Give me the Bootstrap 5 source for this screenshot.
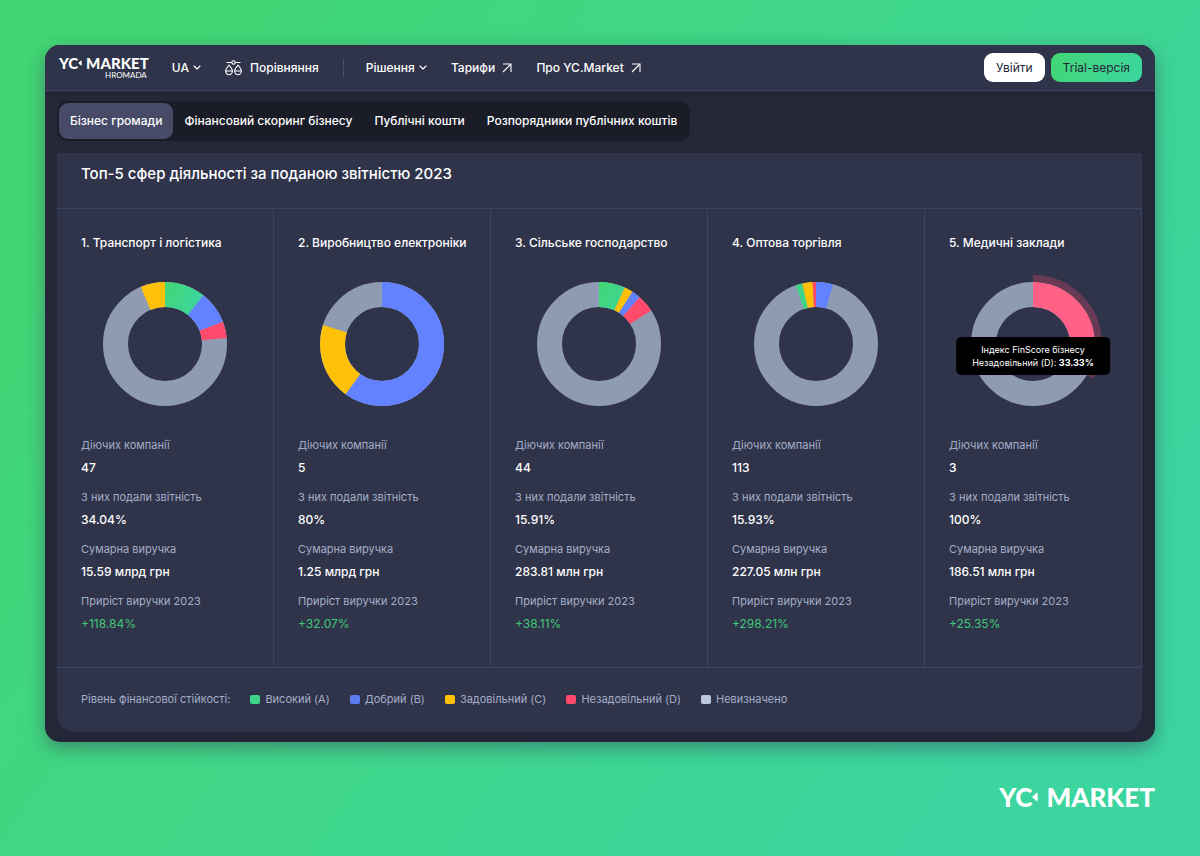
<!DOCTYPE html>
<html lang="uk">
<head>
<meta charset="utf-8">
<meta name="viewport" content="width=device-width, initial-scale=1">
<title>YC Market Hromada</title>
<link href="https://cdn.jsdelivr.net/npm/bootstrap@5.3.0/dist/css/bootstrap.min.css" rel="stylesheet">
<style>
:root{--panel:#30344a;--line:#3d4260;--muted:#a3aec8;--brand:linear-gradient(120deg,#42d674,#3cd5a0)}
body{font-family:Inter,"Liberation Sans",sans-serif;font-size:12px;line-height:20px;color:#fff;background:linear-gradient(125deg,#42d674 10%,#3ed68e 55%,#3cd5a0 85%);min-height:100vh;padding:45px}
.app-frame{background:#242737;border-radius:15px;box-shadow:0 6px 18px rgba(60,64,90,.5);overflow:hidden}
.topbar{background:var(--panel);border-bottom:1px solid var(--line);padding:8px 13px 8px 14px;font-weight:500}
.topbar a,.logo{color:#fff;text-decoration:none}
.menu-btn{background:none;border:0;color:#fff;padding:0;font-weight:500}
.menu-btn svg{margin-left:1px}
.main-nav{margin-left:23px}
.logo{font-family:Lato,"Liberation Sans",sans-serif;font-weight:900;white-space:nowrap;display:flex;align-items:center}
.logo-sm{font-size:15px;line-height:15px}
.logo-lg{font-size:26px;line-height:26px}
.logo-sub{font:400 8px/9px Lato,"Liberation Sans",sans-serif;padding-right:2px}
.vline{width:1px;height:18px;background:#474c68;margin:0 22px 0 24px}
.btn-top{height:29px;padding:0 12px;border:0;border-radius:9px;font-size:12px;font-weight:400;line-height:20px;color:#242737;background:#fff}
.btn-trial,.btn-trial:hover{background:var(--brand);color:#242737}
.top-actions{gap:6px}
.workspace{padding:10px 13px 10px 12px}
.tab-strip{background:#1a1c27;border-radius:11px;padding:2px;width:fit-content}
.tab-strip .nav-link{height:36px;padding:0 11px;border-radius:9px;color:#fff;font-weight:500;line-height:36px}
.tab-strip .nav-link.active{background:#474b68}
.report{background:var(--panel);border-radius:2px 2px 18px 18px;margin-top:12px}
.report h1{font-size:15px;line-height:20px;font-weight:500;margin:0;padding:11px 24px 24px;border-bottom:1px solid var(--line)}
.sector{border-right:1px solid var(--line);padding:24px 0 33px 24px}
.sector h2{font-size:12px;line-height:20px;font-weight:500;margin:0;white-space:nowrap}
.ring-box{position:relative;text-align:center;margin:21px 24px 22px 0}
.ring-box svg{display:block;margin:auto}
.ring-box circle{fill:none;stroke-width:25}
.ring-box .ring-halo{stroke-width:7}
.stats{margin:0}
.stats dt{font-size:11px;line-height:18px;font-weight:400;color:var(--muted)}
.stats dd{font-size:12px;line-height:20px;font-weight:500;margin:4px 0 10px}
.stats dd:last-child{color:#3fc878;margin-bottom:0;font-weight:400}
.ring-tip{position:absolute;top:63px;left:50%;transform:translateX(-50%);background:#000;border-radius:5px;padding:6px 16px;font-size:9px;line-height:13px;white-space:nowrap}
.legend-row{border-top:1px solid var(--line);padding:21px 24px 23px;font-size:11px;color:var(--muted);gap:20px}
.swatch{width:10px;height:9px;border-radius:2px;margin-right:5px}
.sw-a{background:#3fd588}.sw-b{background:#5a7bf0}.sw-c{background:#ffc107}.sw-d{background:#ff4a6b}.sw-n{background:#bcc7dd}
.foot{padding-top:42px}
</style>
</head>
<body>
<svg width="0" height="0" class="position-absolute" aria-hidden="true"><defs>
<linearGradient id="ga" gradientUnits="userSpaceOnUse" x1="130" y1="70" x2="115" y2="108"><stop offset="0" stop-color="#42d674"/><stop offset="1" stop-color="#3cd5a0"/></linearGradient>
<symbol id="chev" viewBox="0 0 8 6"><path d="M1 1l3 3 3-3" fill="none" stroke="#fff" stroke-width="1.1" stroke-linecap="round" stroke-linejoin="round"/></symbol>
<symbol id="arrow" viewBox="0 0 10 10"><path d="M1 1h8v8M9 1L1 9" fill="none" stroke="#fff" stroke-width="1.1"/></symbol>
<symbol id="spark" viewBox="0 0 6 10"><path d="M0 5L5 0.500 6 3Q5 5 6 7L5 9.500z" fill="#fff"/></symbol>
</defs></svg>

<main class="app-frame">
  <header class="topbar d-flex align-items-center">
    <a href="#" class="d-flex flex-column align-items-end">
      <span class="logo logo-sm">YC<svg width="4" height="6" class="me-1"><use href="#spark"/></svg>MARKET</span>
      <span class="logo-sub">HROMADA</span>
    </a>
    <nav class="main-nav d-flex align-items-center">
      <button type="button" class="menu-btn">UA <svg width="8" height="6"><use href="#chev"/></svg></button>
      <a href="#" class="d-flex align-items-center ms-4"><svg class="me-2" width="17" height="16" viewBox="0 0 17 16" fill="none" stroke="#fff" stroke-width="1.100" stroke-linejoin="round"><path d="M1.500 2.500h5M10.500 2.500h5"/><circle cx="8.500" cy="2.500" r="1.700"/><path d="M4 5L1.500 8.500Q.5 10.200 .6 11h6.800Q7.500 10.200 6.500 8.500zM.6 11a3.400 3.700 0 0 0 6.800 0M13 5l-2.500 3.500Q9.500 10.200 9.600 11h6.800Q16.500 10.200 15.500 8.500zM9.600 11a3.400 3.700 0 0 0 6.800 0"/></svg>Порівняння</a>
      <span class="vline"></span>
      <button type="button" class="menu-btn">Рішення <svg width="8" height="6"><use href="#chev"/></svg></button>
      <a href="#" class="ms-4">Тарифи <svg class="ms-1" width="10" height="10"><use href="#arrow"/></svg></a>
      <a href="#" class="ms-4">Про YC.Market <svg class="ms-1" width="10" height="10"><use href="#arrow"/></svg></a>
    </nav>
    <div class="top-actions d-flex ms-auto">
      <button type="button" class="btn btn-top">Увійти</button>
      <button type="button" class="btn btn-top btn-trial">Trial-версія</button>
    </div>
  </header>

  <div class="workspace">
    <nav class="nav tab-strip">
      <a class="nav-link active" href="#" aria-current="page">Бізнес громади</a>
      <a class="nav-link" href="#">Фінансовий скоринг бізнесу</a>
      <a class="nav-link" href="#">Публічні кошти</a>
      <a class="nav-link" href="#">Розпорядники публічних коштів</a>
    </nav>

    <section class="report">
      <h1>Топ-5 сфер діяльності за поданою звітністю 2023</h1>
      <div class="row row-cols-5 g-0">
        <article class="col sector">
          <h2>1. Транспорт і логістика</h2>
          <div class="ring-box">
            <svg width="140" height="140" viewBox="0 0 140 140"><g transform="rotate(-90 70 70)">
              <circle cx="70" cy="70" r="49.500" stroke="#8f9bb3"/>
              <circle cx="70" cy="70" r="49.500" pathLength="47" stroke="url(#ga)" stroke-dasharray="5 42"/>
              <circle cx="70" cy="70" r="49.500" pathLength="47" stroke="#6282ff" stroke-dasharray="4 43" stroke-dashoffset="-5"/>
              <circle cx="70" cy="70" r="49.500" pathLength="47" stroke="#ff4a6b" stroke-dasharray="2 45" stroke-dashoffset="-9"/>
              <circle cx="70" cy="70" r="49.500" pathLength="47" stroke="#ffc107" stroke-dasharray="3 44" stroke-dashoffset="-44"/>
            </g></svg>
          </div>
          <dl class="stats"><dt>Діючих компанії</dt><dd>47</dd><dt>З них подали звітність</dt><dd>34.04%</dd><dt>Сумарна виручка</dt><dd>15.59 млрд грн</dd><dt>Приріст виручки 2023</dt><dd>+118.84%</dd></dl>
        </article>
        <article class="col sector">
          <h2>2. Виробництво електроніки</h2>
          <div class="ring-box">
            <svg width="140" height="140" viewBox="0 0 140 140"><g transform="rotate(-90 70 70)">
              <circle cx="70" cy="70" r="49.500" stroke="#8f9bb3"/>
              <circle cx="70" cy="70" r="49.500" pathLength="5" stroke="#6282ff" stroke-dasharray="3 2"/>
              <circle cx="70" cy="70" r="49.500" pathLength="5" stroke="#ffc107" stroke-dasharray="1 4" stroke-dashoffset="-3"/>
            </g></svg>
          </div>
          <dl class="stats"><dt>Діючих компанії</dt><dd>5</dd><dt>З них подали звітність</dt><dd>80%</dd><dt>Сумарна виручка</dt><dd>1.25 млрд грн</dd><dt>Приріст виручки 2023</dt><dd>+32.07%</dd></dl>
        </article>
        <article class="col sector">
          <h2>3. Сільське господарство</h2>
          <div class="ring-box">
            <svg width="140" height="140" viewBox="0 0 140 140"><g transform="rotate(-90 70 70)">
              <circle cx="70" cy="70" r="49.500" stroke="#8f9bb3"/>
              <circle cx="70" cy="70" r="49.500" pathLength="44" stroke="url(#ga)" stroke-dasharray="3 41"/>
              <circle cx="70" cy="70" r="49.500" pathLength="44" stroke="#ffc107" stroke-dasharray="1 43" stroke-dashoffset="-3"/>
              <circle cx="70" cy="70" r="49.500" pathLength="44" stroke="#6282ff" stroke-dasharray="1 43" stroke-dashoffset="-4"/>
              <circle cx="70" cy="70" r="49.500" pathLength="44" stroke="#ff4a6b" stroke-dasharray="2 42" stroke-dashoffset="-5"/>
            </g></svg>
          </div>
          <dl class="stats"><dt>Діючих компанії</dt><dd>44</dd><dt>З них подали звітність</dt><dd>15.91%</dd><dt>Сумарна виручка</dt><dd>283.81 млн грн</dd><dt>Приріст виручки 2023</dt><dd>+38.11%</dd></dl>
        </article>
        <article class="col sector">
          <h2>4. Оптова торгівля</h2>
          <div class="ring-box">
            <svg width="140" height="140" viewBox="0 0 140 140"><g transform="rotate(-90 70 70)">
              <circle cx="70" cy="70" r="49.500" stroke="#8f9bb3"/>
              <circle cx="70" cy="70" r="49.500" pathLength="113" stroke="#6282ff" stroke-dasharray="5 108"/>
              <circle cx="70" cy="70" r="49.500" pathLength="113" stroke="#3fd588" stroke-dasharray="2 111" stroke-dashoffset="-107"/>
              <circle cx="70" cy="70" r="49.500" pathLength="113" stroke="#ffc107" stroke-dasharray="3 110" stroke-dashoffset="-109"/>
              <circle cx="70" cy="70" r="49.500" pathLength="113" stroke="#ff4a6b" stroke-dasharray="1 112" stroke-dashoffset="-112"/>
            </g></svg>
          </div>
          <dl class="stats"><dt>Діючих компанії</dt><dd>113</dd><dt>З них подали звітність</dt><dd>15.93%</dd><dt>Сумарна виручка</dt><dd>227.05 млн грн</dd><dt>Приріст виручки 2023</dt><dd>+298.21%</dd></dl>
        </article>
        <article class="col sector">
          <h2>5. Медичні заклади</h2>
          <div class="ring-box">
            <svg width="140" height="140" viewBox="0 0 140 140"><g transform="rotate(-90 70 70)">
              <circle cx="70" cy="70" r="49.500" stroke="#8f9bb3"/>
              <circle cx="70" cy="70" r="49.500" pathLength="3" stroke="#ff6085" stroke-dasharray="1 2"/>
              <circle class="ring-halo" cx="70" cy="70" r="65.500" pathLength="3" stroke="#683a55" stroke-dasharray="1 2"/>
            </g></svg>
            <div class="ring-tip" role="tooltip">Індекс FinScore бізнесу<br>Незадовільний (D): <b>33.33%</b></div>
          </div>
          <dl class="stats"><dt>Діючих компанії</dt><dd>3</dd><dt>З них подали звітність</dt><dd>100%</dd><dt>Сумарна виручка</dt><dd>186.51 млн грн</dd><dt>Приріст виручки 2023</dt><dd>+25.35%</dd></dl>
        </article>
      </div>
      <div class="legend-row d-flex flex-wrap">
        <span>Рівень фінансової стійкості:</span>
        <span class="d-flex align-items-center"><i class="swatch sw-a"></i>Високий (A)</span>
        <span class="d-flex align-items-center"><i class="swatch sw-b"></i>Добрий (B)</span>
        <span class="d-flex align-items-center"><i class="swatch sw-c"></i>Задовільний (C)</span>
        <span class="d-flex align-items-center"><i class="swatch sw-d"></i>Незадовільний (D)</span>
        <span class="d-flex align-items-center"><i class="swatch sw-n"></i>Невизначено</span>
      </div>
    </section>
  </div>
</main>
<footer class="foot d-flex justify-content-end">
  <span class="logo logo-lg">YC<svg width="6" height="10" class="me-2"><use href="#spark"/></svg>MARKET</span>
</footer>
<script src="https://cdn.jsdelivr.net/npm/bootstrap@5.3.0/dist/js/bootstrap.bundle.min.js"></script>
</body>
</html>
